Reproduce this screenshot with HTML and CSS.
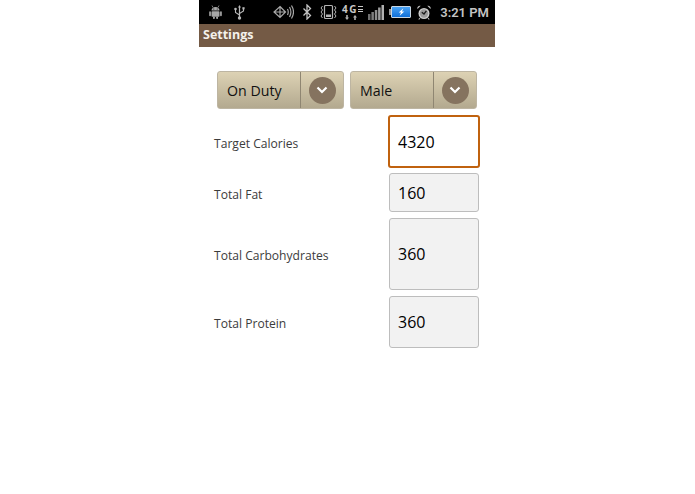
FILE: index.html
```html
<!DOCTYPE html>
<html lang="en">
<head>
  <meta charset="UTF-8" />
  <title>Settings</title>
  <link rel="stylesheet" href="styles.css">
</head>
<body>
  <div class="phone">
    <div class="status-bar">
      <svg class="icon android" viewBox="0 0 13 14"><path fill="none" stroke="#a8a8a8" stroke-width=".7" d="M4 2.500L3 .5M9 2.500L10 .5"/><path fill="#a8a8a8" d="M2.500 5.500c0-2 1.800-3.500 4-3.500s4 1.500 4 3.500z"/><rect x="2.500" y="6.200" width="8" height="5.600" rx=".8" fill="#a8a8a8"/><rect x=".2" y="6.200" width="1.700" height="5" rx=".85" fill="#a8a8a8"/><rect x="11.100" y="6.200" width="1.700" height="5" rx=".85" fill="#a8a8a8"/><rect x="4" y="11.500" width="1.800" height="2.500" rx=".7" fill="#a8a8a8"/><rect x="7.200" y="11.500" width="1.800" height="2.500" rx=".7" fill="#a8a8a8"/><circle cx="4.800" cy="4" r=".5" fill="#000"/><circle cx="8.200" cy="4" r=".5" fill="#000"/></svg>
      <svg class="icon usb" viewBox="0 0 11 15"><path fill="#b8b8b8" d="M5.500 0l1.500 2.500H6.100V13h-1.200V2.500H4z"/><path fill="none" stroke="#b8b8b8" stroke-width="1.100" d="M1.500 5v2.500l4 2.500M9.500 4v2l-4 2.500"/><circle cx="5.500" cy="13" r="1.700" fill="#b8b8b8"/><circle cx="1.500" cy="4" r="1.300" fill="#b8b8b8"/><rect x="8.400" y="2.200" width="2.200" height="2.200" fill="#b8b8b8"/></svg>
      <svg class="icon gps" viewBox="0 0 21 16"><path fill="none" stroke="#a8a8a8" stroke-width="1.200" d="M7 2.500l5.500 5.500-5.500 5.500-6-5.500zM1 8h11.500M7 2.500v11M14.500 5q1.500 3 0 6M16.500 3q2.800 5 0 10M18.500 1.500q4 6.500 0 13"/></svg>
      <svg class="icon bt" viewBox="0 0 10 16"><path fill="none" stroke="#c4c4c4" stroke-width="1.300" d="M1.500 4.500l7 7-3.500 3.500v-14l3.500 3.500-7 7"/></svg>
      <svg class="icon vib" viewBox="0 0 17 16"><rect x="4.500" y="1.500" width="8" height="13" rx="1" fill="none" stroke="#b5b5b5" stroke-width="1.200"/><rect x="6" y="10.500" width="5" height="2.500" fill="#b5b5b5"/><path fill="none" stroke="#b5b5b5" d="M2.500 2L1 4l1.500 2L1 8l1.500 2L1 12l1.500 2M14.500 2L16 4l-1.500 2L16 8l-1.500 2L16 12l-1.500 2"/></svg>
      <div class="net">
        <div class="net-top"><span class="net-label">4G</span><span class="net-lines"></span></div>
        <svg class="net-arrows" viewBox="0 0 14 5"><path fill="#b0b0b0" d="M2 5L0 2.500h1.200V0h1.600v2.500H4zM10 0l2 2.500h-1.200V5H9.200V2.500H8z"/></svg>
      </div>
      <svg class="icon signal" viewBox="0 0 16 15"><rect x="0" y="9" width="2.500" height="6" fill="#6e6e6e"/><rect x="3.400" y="7" width="2.500" height="8" fill="#7e7e7e"/><rect x="6.800" y="5" width="2.500" height="10" fill="#8e8e8e"/><rect x="10.100" y="2.500" width="2.500" height="12.500" fill="#9e9e9e"/><rect x="13.500" y="0" width="2.500" height="15" fill="#b0b0b0"/></svg>
      <div class="battery"><div class="battery-cap"></div><div class="battery-body"><svg viewBox="0 0 12 8" class="bolt"><path fill="#fff" d="M8 0L3 4.500h2.500L4 8l5-4.500H6.500z"/></svg></div></div>
      <svg class="icon alarm" viewBox="0 0 14 15"><path fill="#c4c4c4" d="M.5 4a2.500 2.500 0 0 1 3.200-3.200zM13.500 4a2.500 2.500 0 0 0-3.200-3.200z"/><circle cx="7" cy="8.500" r="5.500" fill="#cfcfcf"/><circle cx="7" cy="8.500" r="4.200" fill="#9a9a9a"/><path fill="none" stroke="#1a1a1a" stroke-width="1.300" d="M4.800 7.200L7 9l2.400-3.200"/><path fill="none" stroke="#b5b5b5" stroke-width="1.200" d="M3 13l-1.200 1.500M11 13l1.200 1.500"/></svg>
      <span class="clock">3:21 PM</span>
    </div>
    <div class="title-bar">Settings</div>
    <div class="content">
      <div class="spinners">
        <div class="spinner">
          <span class="spinner-text">On Duty</span>
          <div class="spinner-arrow"><span class="arrow-circle"><svg viewBox="0 0 12 8"><path fill="none" stroke="#fff" stroke-width="2.200" d="M1.500 1.500L6 6l4.500-4.500"/></svg></span></div>
        </div>
        <div class="spinner">
          <span class="spinner-text">Male</span>
          <div class="spinner-arrow"><span class="arrow-circle"><svg viewBox="0 0 12 8"><path fill="none" stroke="#fff" stroke-width="2.200" d="M1.500 1.500L6 6l4.500-4.500"/></svg></span></div>
        </div>
      </div>
      <div class="row row-calories">
        <label>Target Calories</label>
        <div class="field">4320</div>
      </div>
      <div class="row row-fat">
        <label>Total Fat</label>
        <div class="field">160</div>
      </div>
      <div class="row row-carbs">
        <label>Total Carbohydrates</label>
        <div class="field">360</div>
      </div>
      <div class="row row-protein">
        <label>Total Protein</label>
        <div class="field">360</div>
      </div>
    </div>
  </div>
</body>
</html>
```

FILE: styles.css
```css
* {
  box-sizing: border-box;
}

body {
  margin: 0;
  background: #fff;
  font-family: "Open Sans", "Noto Sans", sans-serif;
}

.phone {
  width: 296px;
  height: 494px;
  margin-left: 199px;
  background: #fff;
}

.status-bar {
  height: 24px;
  background: #000;
  display: flex;
  align-items: center;
  padding: 0 6px 0 10px;
}

.icon {
  flex: none;
}

.android { width: 13px; height: 14px; }
.usb { width: 11px; height: 15px; margin-left: 12px; }
.gps { width: 21px; height: 16px; margin-left: 28px; }
.bt { width: 10px; height: 16px; margin-left: 8px; }
.vib { width: 17px; height: 16px; margin-left: 8px; }
.signal { width: 16px; height: 15px; margin-left: 4px; }
.alarm { width: 14px; height: 15px; margin-left: 6px; }

.net {
  width: 22px;
  margin-left: 5px;
  color: #c8c8c8;
}

.net-top {
  display: flex;
  align-items: center;
  height: 9px;
}

.net-label {
  font-size: 10px;
  font-weight: 700;
  line-height: 9px;
  letter-spacing: 1.5px;
}

.net-lines {
  width: 5px;
  height: 6px;
  border-top: 1px solid #c8c8c8;
  border-bottom: 1px solid #c8c8c8;
  background: linear-gradient(#c8c8c8, #c8c8c8) center / 100% 1px no-repeat;
}

.net-arrows {
  display: block;
  width: 14px;
  height: 5px;
  margin: 1px 0 0 3px;
}

.battery {
  display: flex;
  align-items: center;
  margin-left: 5px;
}

.battery-cap {
  width: 2px;
  height: 6px;
  background: #9a9a9a;
}

.battery-body {
  width: 20px;
  height: 12px;
  background: linear-gradient(#4aa3f5, #0f6fd8);
  border: 1px solid #c9d6e2;
  border-radius: 1px;
  display: flex;
  align-items: center;
  justify-content: center;
}

.bolt {
  width: 11px;
  height: 8px;
}

.clock {
  margin-left: auto;
  color: #c4c4c4;
  font-size: 13px;
  font-weight: 600;
  font-family: "Roboto", sans-serif;
}

.title-bar {
  height: 23px;
  background: #745a45;
  color: #f4f1ec;
  font-size: 12.500px;
  font-weight: 700;
  line-height: 22px;
  padding-left: 4px;
}

.content {
  padding: 24px 15px 0;
}

.spinners {
  display: flex;
  gap: 6px;
  padding: 0 3px;
}

.spinner {
  flex: 1;
  height: 38px;
  display: flex;
  border: 1px solid #bdb5a2;
  border-radius: 3px;
  background: linear-gradient(#ddd2b4, #b3a98f);
}

.spinner-text {
  flex: 1;
  font-size: 14.200px;
  color: #111;
  line-height: 37px;
  padding-left: 9px;
}

.spinner-arrow {
  width: 43px;
  border-left: 1px solid #8f8672;
  display: flex;
  align-items: center;
  justify-content: center;
}

.arrow-circle {
  width: 27px;
  height: 27px;
  border-radius: 50%;
  background: #85735f;
  display: flex;
  align-items: center;
  justify-content: center;
}

.arrow-circle svg {
  width: 12px;
  height: 8px;
}

.row {
  display: flex;
  align-items: center;
  justify-content: space-between;
  font-size: 12.100px;
  color: #3c3c3c;
}

.row label {
  padding-top: 3px;
}

.field {
  width: 90px;
  height: 100%;
  margin-right: 1px;
  display: flex;
  align-items: center;
  padding-left: 8px;
  font-size: 16px;
  color: #000;
  background: #f2f2f2;
  border: 1px solid #bdbdbd;
  border-radius: 3px;
}

.row-calories {
  height: 53px;
  margin-top: 6px;
}

.row-calories .field {
  width: 92px;
  margin-right: 0;
  background: #fff;
  border: 2.500px solid #c0620f;
}

.row-fat {
  height: 39px;
  margin-top: 5px;
}

.row-carbs {
  height: 72px;
  margin-top: 6px;
}

.row-protein {
  height: 52px;
  margin-top: 6px;
}
```
